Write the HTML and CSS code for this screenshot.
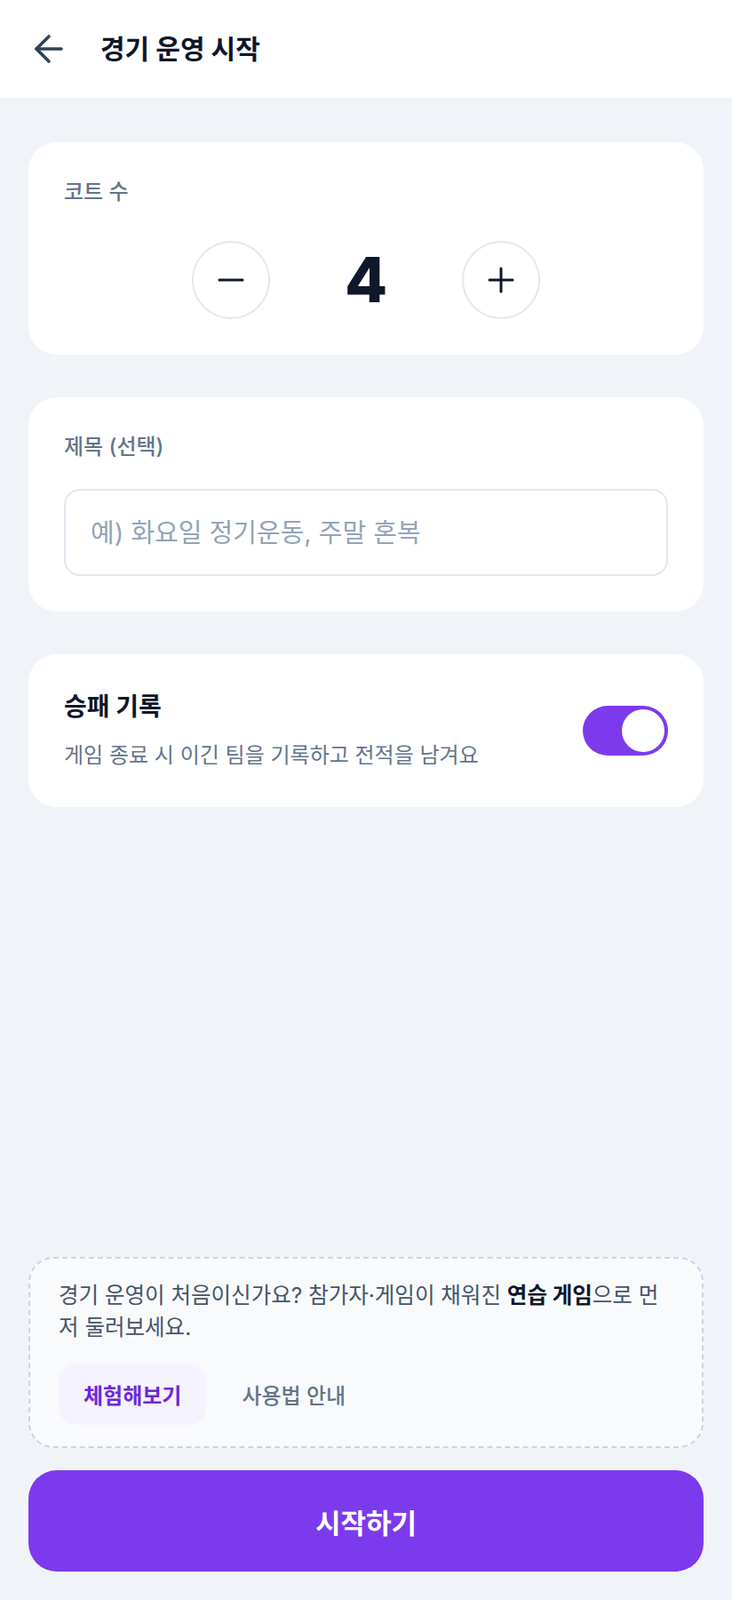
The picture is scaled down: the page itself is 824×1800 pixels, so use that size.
FILE: index.html
```html
<!DOCTYPE html>
<html lang="ko">
<head>
<meta charset="utf-8">
<title>경기 운영 시작</title>
<link rel="stylesheet" href="styles.css">
</head>
<body>
<div class="app">
  <header class="topbar">
    <button class="back" aria-label="뒤로">
      <svg width="48" height="48" viewBox="0 0 24 24" fill="none" stroke="#334155" stroke-width="1.8" stroke-linecap="round" stroke-linejoin="round"><path d="M19 12H5"/><path d="M12 19l-7-7 7-7"/></svg>
    </button>
    <h1 class="title">경기 운영 시작</h1>
  </header>

  <main class="content">
    <section class="card">
      <div class="label">코트 수</div>
      <div class="stepper">
        <button class="step-btn" aria-label="감소">
          <svg width="30" height="30" viewBox="0 0 30 30" fill="none" stroke="#0f172a" stroke-width="3" stroke-linecap="round"><path d="M2 15h26"/></svg>
        </button>
        <div class="count">4</div>
        <button class="step-btn" aria-label="증가">
          <svg width="30" height="30" viewBox="0 0 30 30" fill="none" stroke="#0f172a" stroke-width="3" stroke-linecap="round"><path d="M2 15h26"/><path d="M15 2v26"/></svg>
        </button>
      </div>
    </section>

    <section class="card">
      <div class="label label-input">제목 (선택)</div>
      <input class="text-input" type="text" placeholder="예) 화요일 정기운동, 주말 혼복">
    </section>

    <section class="card card-row">
      <div class="row-text">
        <div class="row-title">승패 기록</div>
        <div class="row-desc">게임 종료 시 이긴 팀을 기록하고 전적을 남겨요</div>
      </div>
      <div class="toggle" role="switch" aria-checked="true"><span class="knob"></span></div>
    </section>
  </main>

  <footer class="bottom">
    <div class="hint">
      <p class="hint-text">경기 운영이 처음이신가요? 참가자·게임이 채워진 <strong>연습 게임</strong>으로 먼저 둘러보세요.</p>
      <div class="hint-actions">
        <button class="pill pill-primary">체험해보기</button>
        <button class="pill pill-ghost">사용법 안내</button>
      </div>
    </div>
    <button class="start">시작하기</button>
  </footer>
</div>
</body>
</html>
```

FILE: styles.css
```css
* { box-sizing: border-box; }

html, body {
  margin: 0;
  padding: 0;
}

body {
  font-family: "Inter", "Noto Sans CJK KR", sans-serif;
  background: #f0f4f9;
  color: #0f172a;
}

button {
  font-family: inherit;
  border: none;
  background: none;
  padding: 0;
  cursor: pointer;
}

.app {
  min-height: 1800px;
  display: flex;
  flex-direction: column;
}

.topbar {
  height: 110px;
  background: #ffffff;
  display: flex;
  align-items: center;
  padding-left: 31px;
  gap: 34px;
}

.back {
  width: 48px;
  height: 48px;
  display: flex;
  align-items: center;
  justify-content: center;
}

.back svg { display: block; }

.title {
  margin: 0;
  font-size: 30px;
  font-weight: 700;
  color: #0f172a;
  line-height: 1;
}

.content {
  padding: 50px 32px 0;
  display: flex;
  flex-direction: column;
  gap: 48px;
  flex: 1;
}

.card {
  background: #ffffff;
  border-radius: 32px;
  padding: 40px;
}

.label {
  font-size: 24px;
  line-height: 32px;
  color: #64748b;
  font-weight: 500;
  margin-bottom: 39px;
}

.label.label-input {
  margin-bottom: 31px;
}

.stepper {
  display: flex;
  align-items: center;
  justify-content: center;
  gap: 48px;
}

.step-btn {
  width: 88px;
  height: 88px;
  border-radius: 50%;
  border: 2px solid #e2e8f0;
  background: #ffffff;
  display: flex;
  align-items: center;
  justify-content: center;
}

.step-btn svg { display: block; }

.count {
  min-width: 120px;
  text-align: center;
  font-size: 70px;
  font-weight: 800;
  line-height: 88px;
  color: #0f172a;
}

.text-input {
  display: block;
  width: 100%;
  height: 98px;
  border: 2px solid #e2e8f0;
  border-radius: 18px;
  padding: 0 28px;
  font-family: inherit;
  font-size: 29px;
  color: #0f172a;
  background: #ffffff;
  outline: none;
}

.text-input::placeholder {
  color: #94a3b8;
}

.card-row {
  display: flex;
  align-items: center;
  justify-content: space-between;
}

.row-title {
  font-size: 28px;
  font-weight: 700;
  line-height: 38px;
  color: #0f172a;
  margin-bottom: 18px;
}

.row-desc {
  font-size: 24px;
  line-height: 36px;
  color: #64748b;
}

.toggle {
  width: 96px;
  height: 56px;
  border-radius: 28px;
  background: #7c3aed;
  padding: 4px;
  display: flex;
  justify-content: flex-end;
  flex-shrink: 0;
}

.knob {
  width: 48px;
  height: 48px;
  border-radius: 50%;
  background: #ffffff;
}

.bottom {
  padding: 0 32px 32px;
  display: flex;
  flex-direction: column;
  gap: 25px;
}

.hint {
  background: #f8fafc;
  border: 2px dashed #cbd5e1;
  border-radius: 28px;
  padding: 23px 40px 24px 32px;
}

.hint-text {
  margin: 0;
  font-size: 24.5px;
  line-height: 36px;
  color: #475569;
}

.hint-text strong {
  color: #0f172a;
  font-weight: 700;
}

.hint-actions {
  margin-top: 23px;
  display: flex;
  gap: 12px;
}

.pill {
  height: 69px;
  padding: 0 28px;
  border-radius: 20px;
  font-size: 24px;
}

.pill-primary {
  background: #f5f3ff;
  color: #6d28d9;
  font-weight: 700;
}

.pill-ghost {
  color: #64748b;
  font-weight: 500;
}

.start {
  height: 114px;
  border-radius: 32px;
  background: #7c3aed;
  color: #ffffff;
  font-size: 31px;
  font-weight: 700;
  width: 100%;
}
```
